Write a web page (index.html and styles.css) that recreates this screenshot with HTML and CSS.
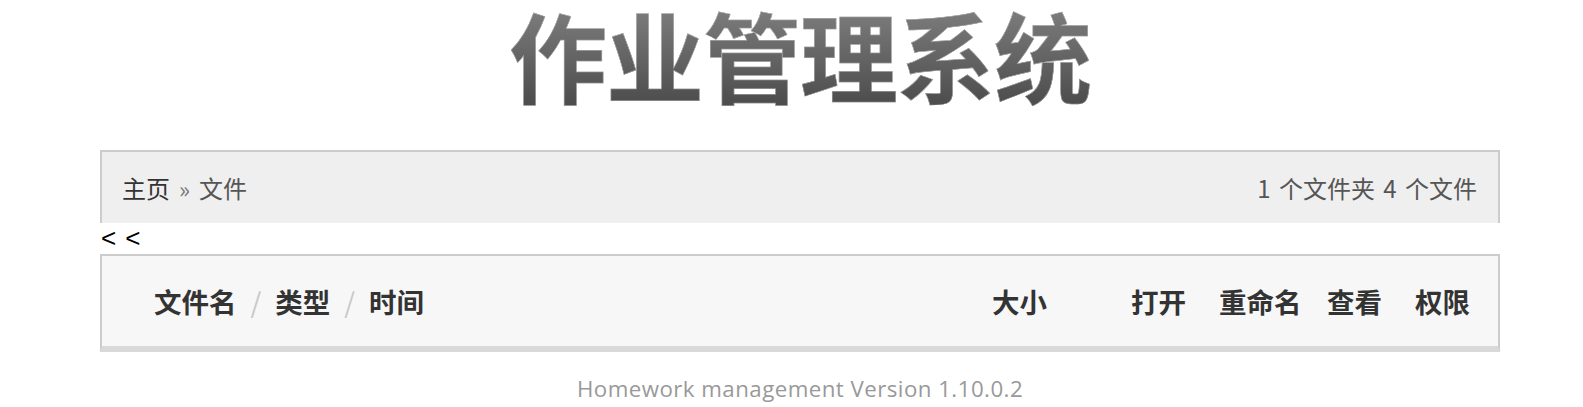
FILE: index.html
```html
<!DOCTYPE html>
<html lang="zh-CN">
<head>
<meta charset="utf-8">
<title>作业管理系统</title>
<link rel="stylesheet" href="styles.css">
</head>
<body>
<header class="masthead">
  <h1 class="site-title">作业管理系统</h1>
</header>
<main class="wrap">
  <div class="crumbs">
    <div class="crumb-path"><a class="crumb-home" href="#">主页</a><span class="crumb-sep">»</span><span class="crumb-cur">文件</span></div>
    <div class="crumb-stats">1 个文件夹 4 个文件</div>
  </div>
  <div class="back"><a href="#">&lt;&lt;</a></div>
  <div class="list-head">
    <div class="col col-name">文件名<span class="slash">/</span>类型<span class="slash">/</span>时间</div>
    <div class="col col-size">大小</div>
    <div class="col col-open">打开</div>
    <div class="col col-rename">重命名</div>
    <div class="col col-view">查看</div>
    <div class="col col-perm">权限</div>
  </div>
</main>
<footer class="foot">Homework management Version 1.10.0.2</footer>
</body>
</html>
```

FILE: styles.css
```css
html, body {
  margin: 0;
  padding: 0;
  background: #fff;
}
body {
  font-family: "Noto Sans CJK SC", "Noto Sans", sans-serif;
  color: #333;
}
a {
  color: inherit;
  text-decoration: none;
}
.masthead {
  display: flow-root;
  height: 150px;
  margin-left: 100px;
  width: 1400px;
}
.site-title {
  margin: 0;
  text-align: center;
  font-size: 98px;
  font-weight: 700;
  line-height: 106px;
  letter-spacing: -1px;
  background: linear-gradient(180deg, #7c7c7c 10%, #4e4e4e 95%);
  -webkit-background-clip: text;
  background-clip: text;
  color: transparent;
  -webkit-text-stroke: 0.5px rgba(200, 200, 200, 0.6);
}
.wrap {
  margin-left: 100px;
  width: 1400px;
}
.crumbs {
  box-sizing: border-box;
  height: 73px;
  background: #efefef;
  border: 2px solid #cccccc;
  border-bottom: 0;
  display: flex;
  align-items: center;
  justify-content: space-between;
  padding: 0 21px 0 20px;
  font-size: 24px;
  color: #666;
}
.crumb-home {
  color: #333;
}
.crumb-sep {
  margin: 0 9px;
  color: #777;
  font-size: 23px;
}
.crumb-cur {
  color: #555;
}
.crumb-stats {
  color: #555;
  word-spacing: 3px;
}
.back {
  height: 31px;
  line-height: 31px;
  font-family: "Liberation Sans", sans-serif;
  font-size: 26px;
  letter-spacing: 9px;
  color: #000;
  padding-left: 1px;
}
.list-head {
  box-sizing: border-box;
  height: 98px;
  background: #f7f7f7;
  border: 2px solid #cccccc;
  border-bottom: 6px solid #d9d9d9;
  display: flex;
  align-items: center;
  font-size: 27.5px;
  font-weight: 700;
  color: #333;
}
.col {
  box-sizing: border-box;
  white-space: nowrap;
}
.col-name { width: 890px; padding-left: 52px; }
.col-size { width: 139px; }
.col-open { width: 88px; }
.col-rename { width: 108px; }
.col-view { width: 88px; }
.col-perm { width: 81px; }
.slash {
  color: #c8c8c8;
  font-weight: 400;
  margin: 0 14px;
}
.foot {
  margin-left: 100px;
  width: 1400px;
  text-align: center;
  padding-top: 21px;
  font-family: "Open Sans", "Liberation Sans", sans-serif;
  font-size: 22.3px;
  letter-spacing: 0.45px;
  color: #999;
}
```
